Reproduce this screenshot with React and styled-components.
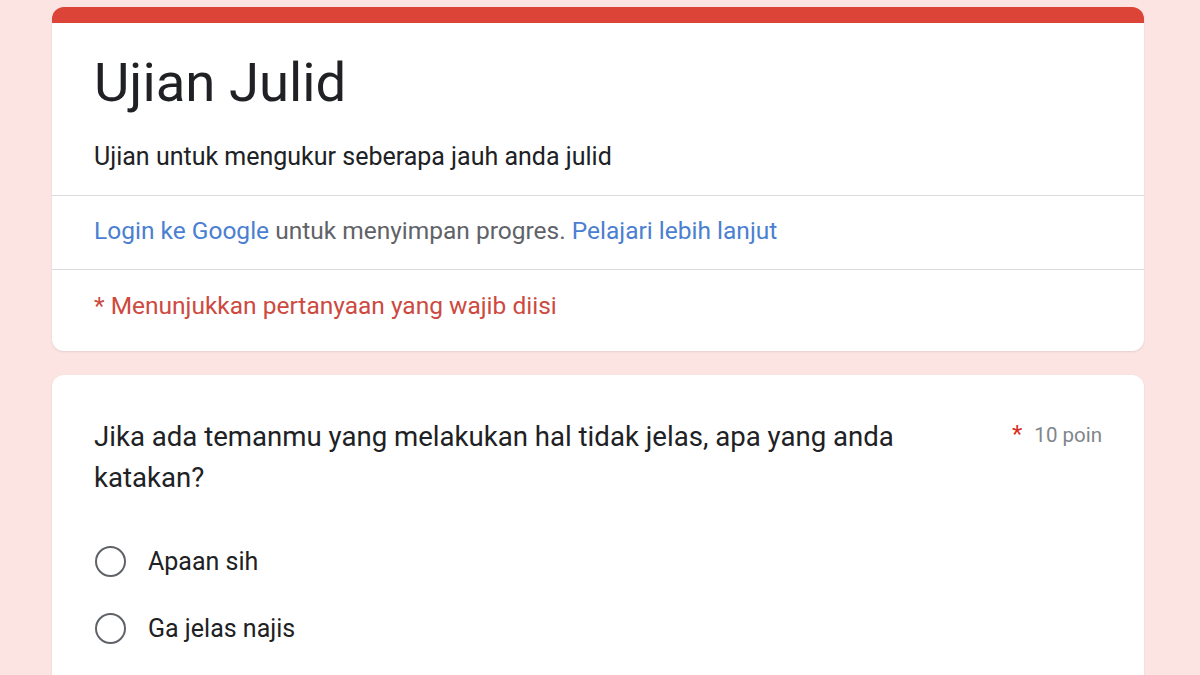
import styled, { createGlobalStyle } from "styled-components";

const GlobalStyle = createGlobalStyle`
  body {
    margin: 0;
    background: #fce4e3;
    font-family: Roboto, "Noto Sans", Arial, sans-serif;
  }
`;

const Page = styled.div`
  display: flex;
  flex-direction: column;
  gap: 24px;
  width: 1092px;
  padding: 7px 0 40px 52px;
`;

const Card = styled.div`
  background: #fff;
  border-radius: 12px;
  overflow: hidden;
  box-shadow: 0 1px 2px rgba(60, 64, 67, 0.12);
  border-top: ${(p) => (p.$accent ? "16px solid #db4437" : "none")};
`;

const Section = styled.div`
  padding: ${(p) => p.$pad || "0 42px"};
  border-top: ${(p) => (p.$divided ? "1px solid #dadce0" : "none")};
`;

const Title = styled.h1`
  margin: 0;
  font-size: 54.5px;
  font-weight: 400;
  line-height: 65px;
  color: #202124;
`;

const Text = styled.p`
  margin: 0;
  font-size: 24.5px;
  line-height: 32px;
  color: ${(p) => p.$color || "#202124"};
`;

const Description = styled(Text)`
  margin-top: 26px;
  font-size: 25px;
`;

const Link = styled.a`
  color: #4a7fd1;
  text-decoration: none;
`;

const Muted = styled.span`
  color: #5f6368;
`;

const QuestionHead = styled.div`
  display: flex;
  justify-content: space-between;
  align-items: flex-start;
  gap: 40px;
`;

const Question = styled.div`
  font-size: 27.6px;
  line-height: 41px;
  color: #202124;
  max-width: 840px;
`;

const Points = styled.div`
  display: flex;
  align-items: baseline;
  gap: 12px;
  padding-top: 4px;
  white-space: nowrap;
  font-size: 20.5px;
  color: #80868b;
`;

const Star = styled.span`
  color: #d93025;
  font-size: 24px;
`;

const Options = styled.div`
  display: flex;
  flex-direction: column;
  gap: 36px;
  padding-top: 48px;
`;

const Option = styled.label`
  display: flex;
  align-items: center;
  gap: 22px;
  font-size: 25px;
  color: #202124;
`;

const Radio = styled.span`
  width: 27px;
  height: 27px;
  margin-left: 1px;
  border: 2.5px solid #5f6368;
  border-radius: 50%;
  flex-shrink: 0;
`;

export default function App() {
  return (
    <>
      <GlobalStyle />
      <Page>
        <Card $accent>
          <Section $pad="27px 42px 22px">
            <Title>Ujian Julid</Title>
            <Description>Ujian untuk mengukur seberapa jauh anda julid</Description>
          </Section>
          <Section $divided $pad="19px 42px 22px">
            <Text>
              <Link href="#">Login ke Google</Link>{" "}
              <Muted>untuk menyimpan progres.</Muted>{" "}
              <Link href="#">Pelajari lebih lanjut</Link>
            </Text>
          </Section>
          <Section $divided $pad="20px 42px 29px">
            <Text $color="#cc4a40">* Menunjukkan pertanyaan yang wajib diisi</Text>
          </Section>
        </Card>
        <Card>
          <Section $pad="41px 42px 60px">
            <QuestionHead>
              <Question>
                Jika ada temanmu yang melakukan hal tidak jelas, apa yang anda
                katakan?
              </Question>
              <Points>
                <Star>*</Star>
                10 poin
              </Points>
            </QuestionHead>
            <Options>
              <Option>
                <Radio />
                Apaan sih
              </Option>
              <Option>
                <Radio />
                Ga jelas najis
              </Option>
            </Options>
          </Section>
        </Card>
      </Page>
    </>
  );
}
